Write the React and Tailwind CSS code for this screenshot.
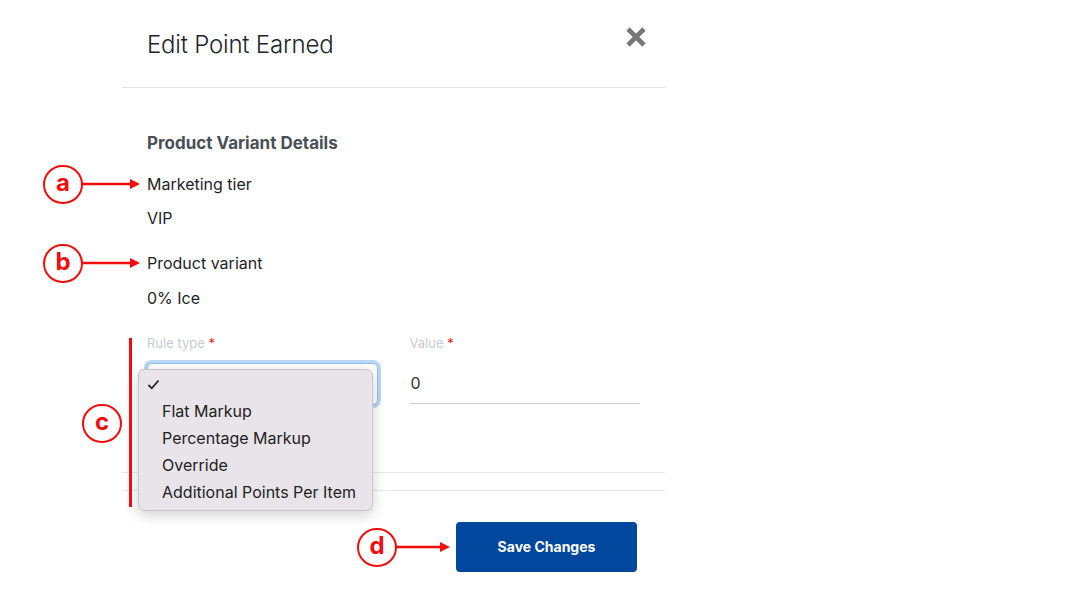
import React from "react";

const options = ["Flat Markup", "Percentage Markup", "Override", "Additional Points Per Item"];

const Callout = ({ letter, className }) => (
  <div
    className={`absolute flex h-[39px] w-[40px] items-center justify-center rounded-full border-[2.5px] border-[#f20d0d] bg-white text-[24px] font-bold leading-none text-[#f20d0d] ${className}`}
  >
    <span className="-mt-[3px]">{letter}</span>
  </div>
);

const Arrow = ({ className, width }) => (
  <svg className={`absolute ${className}`} width={width} height="12" viewBox={`0 0 ${width} 12`}>
    <line x1="0" y1="6" x2={width - 8} y2="6" stroke="#f20d0d" strokeWidth="2.5" />
    <polygon points={`${width - 10},1 ${width},6 ${width - 10},11`} fill="#f20d0d" />
  </svg>
);

export default function App() {
  return (
    <div
      className="relative h-[601px] w-[1076px] overflow-hidden bg-white text-[#1f2328]"
      style={{ fontFamily: "Inter, 'Liberation Sans', sans-serif" }}
    >
      <div className="ml-[122px] flex w-[543px] flex-col">
        <div className="flex h-[88px] items-center justify-between border-b border-[#e3e3e3] pl-[25px] pr-[16px]">
          <h2 className="mt-[3px] text-[24px] font-light tracking-[-0.2px] text-[#212529]">Edit Point Earned</h2>
          <button className="-mt-[13px] flex h-[26px] w-[26px] items-center justify-center">
            <svg width="22" height="22" viewBox="0 0 22 22">
              <path d="M3 3 L19 19 M19 3 L3 19" stroke="#777" strokeWidth="4.6" />
            </svg>
          </button>
        </div>

        <div className="flex flex-col px-[25px] pt-[43px]">
          <h3 className="text-[17px] font-bold leading-[24px] text-[#4a4f57]">Product Variant Details</h3>
          <p className="mt-[17px] text-[16px] leading-[24px]">Marketing tier</p>
          <p className="mt-[10px] text-[16px] leading-[24px]">VIP</p>
          <p className="mt-[21px] text-[16px] leading-[24px]">Product variant</p>
          <p className="mt-[11px] text-[16px] leading-[24px]">0% Ice</p>

          <div className="mt-[25px] grid grid-cols-2 gap-8">
            <div className="flex flex-col">
              <label className="text-[13px] leading-[16px] text-[#c8ccd2]">
                Rule type <span className="text-[#ff1a1a]">*</span>
              </label>
              <div className="mt-[12px] h-[42px] w-[231px] rounded-[5px] border border-[#8fbff0] bg-white ring-[3px] ring-[#b9d7f7]"></div>
            </div>
            <div className="flex flex-col">
              <label className="text-[13px] leading-[16px] text-[#c8ccd2]">
                Value <span className="text-[#ff1a1a]">*</span>
              </label>
              <div className="mt-[12px] flex h-[41px] items-center border-b border-[#cfcfcf] pl-[1px] text-[16px] text-[#333]">0</div>
            </div>
          </div>
        </div>

        <div className="mt-[67px] border-b border-[#e6e6e6]"></div>
        <div className="mt-[17px] flex justify-end border-t border-[#e6e6e6] pr-[28px] pt-[31px]">
          <button className="h-[50px] w-[181px] rounded-[4px] bg-[#00479d] pb-[2px] text-[14px] font-bold text-white">
            Save Changes
          </button>
        </div>
      </div>

      <div className="absolute left-[138px] top-[369px] w-[235px] rounded-[6px] border border-[#c9c4c9] bg-[#e9e4e9] pb-[5px] pt-[2px] shadow-[0_4px_14px_rgba(0,0,0,0.18)]">
        <div className="flex h-[25px] items-center pl-[8px]">
          <svg width="13" height="11" viewBox="0 0 13 11">
            <path d="M1.5 6 L4.8 9.3 L11.5 1.5" fill="none" stroke="#222" strokeWidth="1.8" />
          </svg>
        </div>
        {options.map((o) => (
          <div key={o} className="flex h-[27px] items-center pl-[23px] text-[16px] text-[#222]">
            {o}
          </div>
        ))}
      </div>

      <Callout letter="a" className="left-[43px] top-[165px]" />
      <Arrow className="left-[82px] top-[178px]" width={58} />
      <Callout letter="b" className="left-[43px] top-[244px]" />
      <Arrow className="left-[82px] top-[257px]" width={58} />
      <div className="absolute left-[129px] top-[338px] h-[169px] w-[3px] bg-[#f20d0d]"></div>
      <Callout letter="c" className="left-[82px] top-[404px]" />
      <Callout letter="d" className="left-[357px] top-[528px]" />
      <Arrow className="left-[396px] top-[541px]" width={54} />
    </div>
  );
}
